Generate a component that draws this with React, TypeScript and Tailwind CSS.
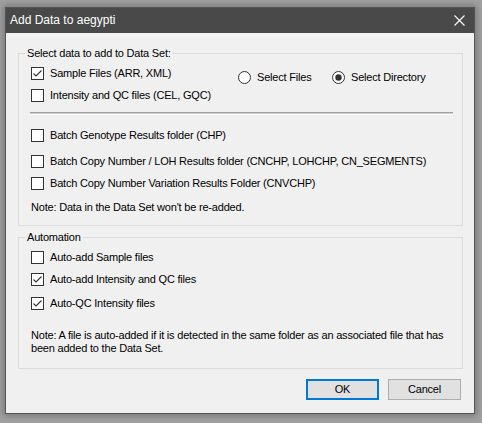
import React from "react";

const Check = ({ checked }: { checked?: boolean }) => (
  <span className="w-[13px] h-[13px] border border-[#333333] bg-white flex items-center justify-center shrink-0">
    {checked && (
      <svg width="11" height="11" viewBox="0 0 11 11">
        <path d="M1.5 5.5 L4 8 L9.5 2.5" fill="none" stroke="#333333" strokeWidth="1.1" />
      </svg>
    )}
  </span>
);

const Radio = ({ checked }: { checked?: boolean }) => (
  <svg width="13" height="13" viewBox="0 0 13 13" className="shrink-0">
    <circle cx="6.5" cy="6.5" r="6" fill="white" stroke="#333333" strokeWidth="1" />
    {checked && <circle cx="6.5" cy="6.5" r="3.2" fill="#333333" />}
  </svg>
);

const Row = ({ checked, label, className = "" }: { checked?: boolean; label: string; className?: string }) => (
  <div className={"flex items-center h-[15px] gap-[6px] " + className}>
    <Check checked={checked} />
    <span className="whitespace-nowrap">{label}</span>
  </div>
);

export default function App() {
  return (
    <div className="w-[482px] h-[423px] bg-[#a2a2a2] pt-[7px] pl-[5px] font-['Liberation_Sans',sans-serif] text-[11px] tracking-[-0.2px] text-black leading-[15px]">
      <div className="w-[470px] h-[407px] border border-[#555555] bg-[#f0f0f0] flex flex-col shadow-[0_0_7px_2px_rgba(0,0,0,0.25)]">
        <div className="h-[25px] bg-[#494949] flex items-center justify-between pl-[4px] pr-[9px] shrink-0">
          <span className="text-white text-[12px] tracking-normal">Add Data to aegypti</span>
          <svg width="11" height="11" viewBox="0 0 11 11">
            <path d="M0.5 0.5 L10.5 10.5 M10.5 0.5 L0.5 10.5" stroke="white" strokeWidth="1.1" />
          </svg>
        </div>
        <div className="pl-[12px] flex flex-col">
          <fieldset className="w-[445px] mt-[13px] border border-[#dcdcdc] pl-[12px] pb-[10px]">
            <legend className="-ml-[6px] px-[2px]">Select data to add to Data Set:</legend>
            <div className="flex mt-[5px]">
              <div className="w-[207px] flex flex-col">
                <Row checked label="Sample Files (ARR, XML)" />
                <Row label="Intensity and QC files (CEL, GQC)" className="mt-[7px]" />
              </div>
              <div className="flex mt-[4px] h-[15px]">
                <div className="w-[94px] flex items-center gap-[6px]">
                  <Radio />
                  <span>Select Files</span>
                </div>
                <div className="flex items-center gap-[6px]">
                  <Radio checked />
                  <span>Select Directory</span>
                </div>
              </div>
            </div>
            <div className="w-[423px] -ml-[1px] mt-[9px] h-[3px] border-t border-[#a0a0a0] bg-[#cfcfcf] border-b border-b-white" />
            <Row label="Batch Genotype Results folder (CHP)" className="mt-[13px]" />
            <Row label="Batch Copy Number / LOH Results folder (CNCHP, LOHCHP, CN_SEGMENTS)" className="mt-[11px]" />
            <Row label="Batch Copy Number Variation Results Folder (CNVCHP)" className="mt-[7px]" />
            <div className="mt-[9px] h-[15px]">Note: Data in the Data Set won't be re-added.</div>
          </fieldset>
          <fieldset className="w-[445px] mt-[4px] border border-[#dcdcdc] pl-[12px] pb-[13px]">
            <legend className="-ml-[6px] px-[2px]">Automation</legend>
            <Row label="Auto-add Sample files" className="mt-[5px]" />
            <Row checked label="Auto-add Intensity and QC files" className="mt-[7px]" />
            <Row checked label="Auto-QC Intensity files" className="mt-[9px]" />
            <div className="mt-[18px] leading-[13px] whitespace-nowrap">
              Note: A file is auto-added if it is detected in the same folder as an associated file that has
              <br />
              been added to the Data Set.
            </div>
          </fieldset>
          <div className="w-[445px] flex justify-end gap-[9px] mt-[10px] pr-[2px]">
            <button className="w-[73px] h-[21px] border-2 border-[#0078d7] bg-[#e1e1e1] flex items-center justify-center">OK</button>
            <button className="w-[73px] h-[21px] border border-[#adadad] bg-[#e1e1e1] flex items-center justify-center">Cancel</button>
          </div>
        </div>
      </div>
    </div>
  );
}
